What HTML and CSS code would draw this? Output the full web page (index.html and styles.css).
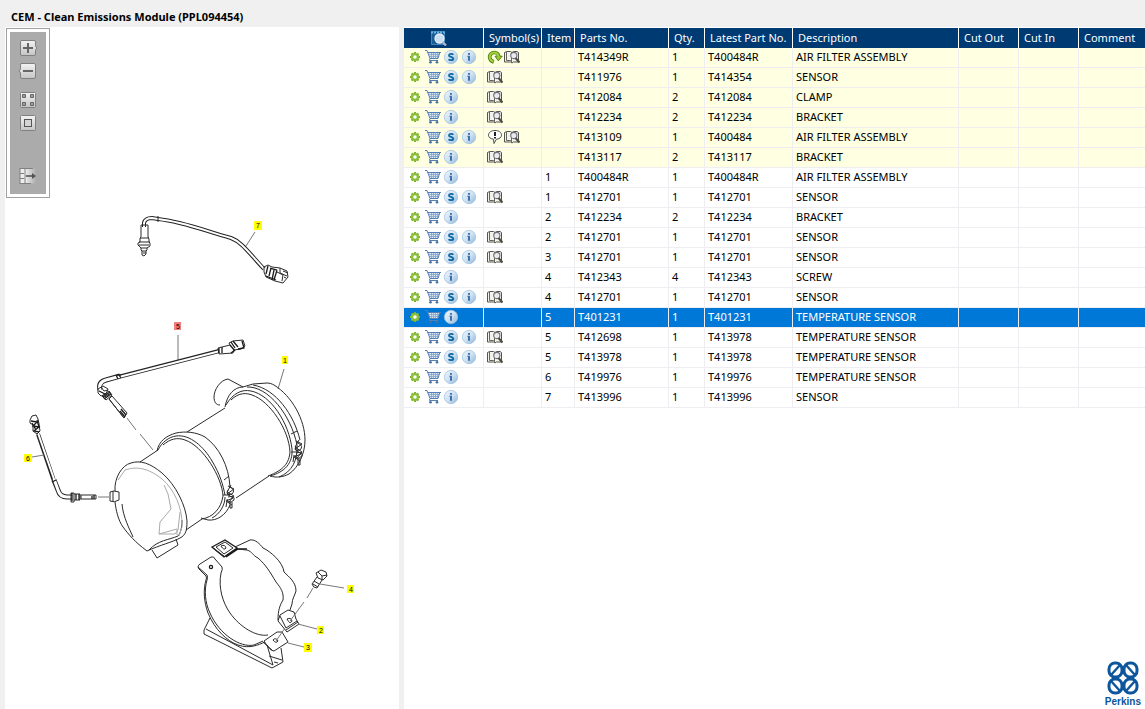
FILE: index.html
```html
<!DOCTYPE html>
<html lang="en">
<head>
<meta charset="utf-8">
<title>CEM - Clean Emissions Module (PPL094454)</title>
<link rel="stylesheet" href="styles.css">
</head>
<body>
<svg class="sprite" aria-hidden="true">
  <defs>
    <linearGradient id="g-ball" x1="0" y1="0" x2="1" y2="1">
      <stop offset="0" stop-color="#eef6fc"/><stop offset=".5" stop-color="#cfe2f1"/><stop offset="1" stop-color="#8fb8da"/>
    </linearGradient>
    <linearGradient id="g-key" x1="0" y1="0" x2="0" y2="1">
      <stop offset="0" stop-color="#f4f4f4"/><stop offset="1" stop-color="#c4c4c4"/>
    </linearGradient>
    <linearGradient id="g-fade" x1="0" y1="0" x2="1" y2="0">
      <stop offset="0" stop-color="#f0f0f0"/><stop offset="1" stop-color="#ababab"/>
    </linearGradient>
  </defs>
  <symbol id="gear" viewBox="0 0 16 16">
    <path d="M8 3V13M3 8H13M4.500 4.500L11.500 11.500M11.500 4.500L4.500 11.500" stroke="#7db32c" stroke-width="2"/>
    <circle cx="8" cy="8" r="2.900" fill="#fff" stroke="#8cbf3c" stroke-width="2.300"/>
  </symbol>
  <symbol id="cart" viewBox="0 0 16 16">
    <path d="M3 3.500H14.500L13 9.500H5Z" fill="#dbe6f3"/>
    <path d="M4 5.500H14M4.500 7.500H13.500M6.500 3.500V9.500M8.500 3.500V9.500M10.500 3.500V9.500M12.500 3.500V9.500" stroke="#84a4cd" stroke-width=".8"/>
    <path d="M0 1.500H2L5 9.500L4.500 11.500H13M2.500 3.500H16M14.800 3.500L13 9.500H5" fill="none" stroke="#5580b5"/>
    <circle cx="5.500" cy="13.300" r="1.300" fill="#44719f"/><circle cx="12" cy="13.300" r="1.300" fill="#44719f"/>
  </symbol>
  <symbol id="super" viewBox="0 0 16 16">
    <circle cx="8" cy="8" r="6.700" fill="url(#g-ball)" stroke="#9dbfdd" stroke-width=".7"/>
    <path d="M10.300 5.700C9.500 4.600 6 4.500 6 6.400C6 8.300 10.200 7.600 10.200 9.700C10.200 11.600 6.500 11.500 5.600 10.300" fill="none" stroke="#0e69a4" stroke-width="1.900"/>
  </symbol>
  <symbol id="info" viewBox="0 0 16 16">
    <circle cx="8" cy="8" r="6.700" fill="url(#g-ball)" stroke="#9dbfdd" stroke-width=".7"/>
    <path d="M7 4h2v1.700h-2zM6.500 6.700h2.500v5h-2v-3.700h-.5z" fill="#3f70ad"/>
  </symbol>
  <symbol id="book" viewBox="0 0 16 16">
    <path d="M.5 3.500L2.500 2.500H6.500L8 3.500L9.500 2.500H13L14.500 3.500V13H9.300L8 14L6.700 13H.5Z" fill="#f3f3ee" stroke="#55554f"/>
    <path d="M2.500 3V11.500H6.500L8 13M7.500 3.500V13" fill="none" stroke="#66665f"/>
    <circle cx="9.800" cy="6.500" r="3.100" fill="#e9e9ee" stroke="#70707a" stroke-width="1.100"/>
    <path d="M11.500 9L15.500 13.500" stroke="#4b4b3d" stroke-width="2"/>
  </symbol>
  <symbol id="reman" viewBox="0 0 16 16">
    <path d="M6.800 13C2.500 11.500 1.600 7.500 3.800 5C6.500 2.300 11 3.200 11.800 7.500" fill="none" stroke="#4e7c11" stroke-width="3.600"/>
    <path d="M8 7.200H15.300L11.300 11.800Z" fill="#9ccb2e" stroke="#4e7c11" stroke-width=".9"/>
    <path d="M6.500 12.700C2.500 11.500 1.600 7.500 3.800 5C6.500 2.300 11 3.200 11.800 8" fill="none" stroke="#a4d435" stroke-width="2"/>
  </symbol>
  <symbol id="note" viewBox="0 0 16 16">
    <path d="M8 1.500C12 1.500 14.500 3.500 14.500 6.200C14.500 8.600 12 10 9.300 10.300L7 14.500L6.500 10.200C3.500 9.800 1.500 8.400 1.500 6.200C1.500 3.500 4 1.500 8 1.500Z" fill="#fff" stroke="#4c4c4c"/>
    <path d="M8 3V7" stroke="#222" stroke-width="2"/><path d="M7 8h2v1.400H7z" fill="#222"/>
  </symbol>
</svg>

<header class="titlebar"><h1 class="title">CEM - Clean Emissions Module (PPL094454)</h1></header>

<main class="workspace">
  <section class="viewer" aria-label="Illustration">
    <svg class="drawing" viewBox="5 27 394 682" role="img" aria-label="Exploded view of the clean emissions module">
      <!-- sensor 7 -->
      <path class="cable" d="M144 227V223Q145 218 152 218L158 219C185 222 205 231 231 238C242 242 249 253 264 269"/>
      <path class="cable-core" d="M144 228V223Q145 218 152 218L158 219C185 222 205 231 231 238C242 242 249 253 265 270"/>
      <path class="part" d="M158 216V222M141 225H148V237L149 239V242L150 243V246L147 248V250L146 251V254L144 256L142 255V251L141 250V248L138 245V243L140 242V238L141 237ZM140 238H149M139 242H150M139 245H149M141 248H147M142 251H146M143 253H146"/>
      <path class="part" d="M264 267L268 265L272 267L280 268L287 271L288 277L283 283L275 281L266 277L264 272Z"/>
      <path class="part bold" d="M268 266L266 274M271 268L269 276M274 270L272 280M277 270L274 280M270 268L277 270M266 276L276 280"/>
      <path class="part" d="M280 268V273L287 276M283 271L288 273M277 272L283 275L282 281M284 277L286 278"/>
      <path class="leader" d="M255 232L246 246M178 335V360M284 369L278 389"/>
      <!-- sensor 5 -->
      <path class="cable" d="M120 376.500L219 351"/><path class="cable-core" d="M119 377L220 351"/>
      <path class="cable wide" d="M120 376L106 380Q98 382 100 390"/><path class="cable-core wide" d="M121 376L106 380Q98 382 100 391"/>
      <path class="part bold" d="M116 375L118 379M119 375L121 378M117 375H121"/>
      <path class="part" d="M98 389L103 386L108 389L106 394L101 396L98 393ZM101 387L104 391L108 390M102 396L109 391L112 395L106 400ZM103 398L111 393M109 399L112 396L127 413L124 418ZM109 399L124 418"/>
      <path class="part bold" d="M99 391L105 394M103 397L110 392M104 399L111 394M120 411L125 417M121 409L126 415"/>
      <path class="part" d="M218 348L230 345L229 343L233 341L243 340L245 346L241 349L234 350L233 353L219 354Z"/>
      <path class="part bold" d="M219 348V353M222 347V353M230 345L235 351M231 342L235 348M233 341L238 347M235 350L231 353M242 341L244 348L238 349"/>
      <path class="leader" d="M127 418L136 430M140 434L153 450"/>
      <!-- rear can -->
      <path class="part" d="M187 432L225 408M236 498L269 476M243 387L228 379C220 380 214 390 214 397C214 402 216 405 220 405"/>
      <path class="part" d="M225 407C227 395 234 387 243 387L253 384L267 383C270 383 272 384 274 385C292 396 305 420 305 440C305 453 299 467 289 474C283 477 277 478 270 476"/>
      <path class="part" d="M226 405C233 393 242 389 251 391C271 395 289 423 292 449C293 463 285 472 270 476M247 387C268 386 291 415 297 445C298 460 292 472 279 477M231 400C239 392 247 393 252 395C270 401 289 430 290 452C289 463 284 470 268 476M253 385C276 389 294 415 300 440M291 434L297 431"/>
      <path class="part" d="M296 441L302 444L295 449L301 454L294 457L300 461M299 440L295 447L302 452L297 458M291 452H298M298 458V465M300 458V465H298M294 455L293 462M298 443Q304 446 300 450Q293 452 296 446M296 453Q303 451 302 456Q296 461 295 455"/>
      <!-- front can -->
      <path class="part" d="M140 462L158 450M157 451C159 441 166 436 176 433C186 431 196 432 205 437C219 447 229 466 230 487M158 450C162 442 169 437 176 436C190 434 204 447 212 461C220 474 223 485 225 495M163 445C170 439 177 437 185 440C203 446 222 477 223 496C221 509 213 517 202 519M230 505C226 515 217 521 208 520L201 518M225 497C225 505 220 514 212 518M224 480L229 476M186 530L202 519"/>
      <path class="part" d="M228 486L234 489L227 494L233 498L226 501L232 505M231 485L227 492L234 496L229 502M223 495H230M230 501V508H232V502M227 501L226 507M230 487Q236 490 232 494Q225 496 228 490M228 497Q235 495 234 500Q228 505 227 499"/>
      <!-- end cap -->
      <path class="part" d="M115 491C114 478 122 465 131 463C140 460 150 463 162 473C176 485 186 506 187 521C187 530 186 535 180 538C173 542 160 545 147 551C135 542 129 535 123 527C118 520 116 510 115 502"/>
      <path class="part" d="M122 504C123 517 130 530 133 537M149 550C158 540 169 540 178 536C180 534 182 529 182 520"/>
      <path class="thin" d="M118 480L125 470C137 466 148 468 162 479C174 489 183 508 182 527L179 536M164 485L168 494L171 509L160 522L159 534L177 529V535M180 512L178 530L175 534L159 534"/>
      <path class="part" d="M152 550L157 558L178 545L176 539M110 492Q113 490 119 492V500Q114 503 110 501ZM113 491V501"/>
      <!-- sensor 6 -->
      <path class="cable" d="M38 434L54 481"/><path class="cable-core" d="M38 433L55 482"/>
      <path class="cable wide" d="M54 480L58 490Q60 497 67 497H72"/><path class="cable-core wide" d="M54 479L58 490Q60 497 67 497H73"/>
      <path class="part" d="M30 420L32 416L36 415L38 419L39 424L40 431L37 434L33 431V425L30 423Z"/>
      <path class="part bold" d="M31 421L37 422L33 426L39 427L34 431L39 432M37 420L39 427M32 423L36 430M52 482L56 480"/>
      <path class="part" d="M71 493H74V502H71ZM74 494H80V500H74M81 495H96V499H81Z"/>
      <path class="part bold" d="M76 494V500M79 494V500M92 496V499M94 495V499M72 493V501"/>
      <path class="leader" d="M98 497H109M32 457L44 455"/>
      <!-- upper strap -->
      <path class="part bold" d="M212 547L225 540L237 548L224 557ZM226 557L238 549L247 549"/>
      <path class="part" d="M216 547L225 542L233 548L224 554ZM214 549L224 556M221 546Q225 544 226 548Q224 551 221 546M235 547L250 540C255 539 260 544 263 548C270 551 283 562 284 572C289 577 296 582 296 591C295 595 292 599 292 604L290 610"/>
      <path class="part" d="M237 549L247 550C253 552 252 555 258 558C266 565 270 572 276 582C281 588 284 593 283 600C280 605 278 610 278 620"/>
      <path class="part" d="M288 610L280 615L278 621L287 632L299 624L296 619L294 612ZM280 616L286 628L297 621M286 630L298 622M287 619Q291 617 292 621Q290 625 287 619"/>
      <!-- lower strap -->
      <path class="part" d="M207 575L198 567Q198 565 200 564L211 557Q214 556 215 559L222 567Q223 569 221 573C218 588 223 603 230 613C240 627 256 637 268 635"/>
      <path class="part" d="M198 567L199 569L206 576Q207 578 206 580C203 590 204 602 208 613C215 630 227 641 238 645C250 649 258 645 265 642M207 575Q208 577 207 580C204 590 205 603 210 613C219 634 240 648 254 645L263 641"/>
      <circle class="part bold" cx="211" cy="567" r="1.600"/>
      <path class="part" d="M264 641L277 632L282 632L288 642L274 651Q270 651 264 641ZM263 642L272 650M273 640Q276 637 278 641Q276 644 273 640"/>
      <path class="part" d="M210 618L204 630V634L272 668L283 662L281 648M206 629L273 665L267 645M269 656L282 660M274 662L278 663"/>
      <!-- bolt -->
      <path class="part" d="M316 573L321 570L326 572L327 576L323 580L318 578ZM318 572L322 576L327 575M322 576V580M317 577L312 584Q313 588 317 588L322 580M314 581L319 584M313 584L318 587"/>
      <path class="leader" d="M313 588L307 598M304 602L290 621M285 628L276 641M320 584L344 588M298 624L317 629M288 643L304 647"/>
      <g class="callouts">
        <rect x="254" y="221" width="8" height="9"/><text x="258" y="228">7</text>
        <rect class="picked" x="174" y="322" width="7" height="8"/><text x="178" y="329">5</text>
        <rect x="282" y="356" width="6" height="8"/><text x="285" y="363">1</text>
        <rect x="24" y="454" width="8" height="8"/><text x="28" y="461">6</text>
        <rect x="347" y="585" width="7" height="8"/><text x="351" y="592">4</text>
        <rect x="317" y="626" width="7" height="8"/><text x="321" y="633">2</text>
        <rect x="304" y="643" width="8" height="9"/><text x="308" y="650">3</text>
      </g>
    </svg>
    <div class="toolbar" role="toolbar" aria-label="View">
      <div class="tools">
        <button class="tool" type="button" aria-label="Zoom in"><svg viewBox="0 0 20 18"><path d="M3 1.500H16Q17.500 1.500 17.500 3V7L19 9L17.500 11V15Q17.500 16.500 16 16.500H4Q2.500 16.500 2.500 15V3Z" fill="url(#g-key)" stroke="#808080"/><path d="M10 4V14M5 9H15" stroke="#666" stroke-width="2"/></svg></button>
        <button class="tool" type="button" aria-label="Zoom out"><svg viewBox="0 0 20 18"><path d="M3 1.500H16Q17.500 1.500 17.500 3V15Q17.500 16.500 16 16.500H4Q2.500 16.500 2.500 15V11L1 9L2.500 7V3Z" fill="url(#g-key)" stroke="#808080"/><path d="M5 9H15" stroke="#666" stroke-width="2"/></svg></button>
      </div>
      <div class="tools">
        <button class="tool" type="button" aria-label="Tile view"><svg viewBox="0 0 20 18"><rect x="2.500" y="1.500" width="15" height="15" rx="1" fill="url(#g-key)" stroke="#808080"/><path d="M4.500 3.500h3v3h-3zM12.500 3.500h3v3h-3zM4.500 11.500h3v3h-3zM12.500 11.500h3v3h-3z" fill="#a0a0a0" stroke="#666"/></svg></button>
        <button class="tool" type="button" aria-label="Fit to window"><svg viewBox="0 0 20 18"><rect x="2.500" y="1.500" width="15" height="15" rx="1" fill="url(#g-key)" stroke="#808080"/><rect x="6.500" y="5.500" width="7" height="7" fill="#d4d4d4" stroke="#555"/></svg></button>
      </div>
      <div class="tools last">
        <button class="tool" type="button" aria-label="Hide panel"><svg viewBox="0 0 20 18"><path d="M7 1.500H18V16.500H7Z" fill="url(#g-fade)"/><path d="M2 1.500H7V16.500H2Z" fill="#eee"/><path d="M2 1.500H15M2 16.500H13M2 1V17M7 1V17M2 6.500H6M2 11.500H6" stroke="#808080" fill="none"/><path d="M8 9H16" stroke="#555" stroke-width="1.600"/><path d="M14 6L18 9L14 12Z" fill="#555"/></svg></button>
      </div>
    </div>
  </section>

  <section class="parts" aria-label="Parts list">
    <table class="grid">
      <colgroup><col class="c-act"><col class="c-sym"><col class="c-item"><col class="c-part"><col class="c-qty"><col class="c-latest"><col class="c-desc"><col class="c-cut"><col class="c-cut"><col></colgroup>
      <thead>
        <tr>
          <th scope="col" class="finder"><button class="icon" type="button" aria-label="Search list"><svg viewBox="0 0 18 16"><path d="M1.500 1.500H14.500V14.500H1.500Z" fill="#1a5c94" stroke="#3a86bd"/><path d="M1 2.500H15" stroke="#69b4e4" stroke-width="2" stroke-dasharray="2 1"/><circle cx="9.500" cy="8.500" r="4.500" fill="#c9dff0" stroke="#e8eff5" stroke-width="1.300"/><path d="M12.500 12L16 15.500" stroke="#a9b9c8" stroke-width="2.400"/></svg></button></th>
          <th scope="col">Symbol(s)</th><th scope="col">Item</th><th scope="col">Parts No.</th><th scope="col">Qty.</th><th scope="col">Latest Part No.</th><th scope="col">Description</th><th scope="col">Cut Out</th><th scope="col">Cut In</th><th scope="col">Comment</th>
        </tr>
      </thead>
      <tbody id="rows"></tbody>
    </table>
    <div class="brand">
      <svg class="logo" viewBox="0 0 32 34" aria-hidden="true"><g fill="none" stroke="#0d559c" stroke-width="3"><rect x="2" y="2" width="13" height="14" rx="6"/><rect x="17" y="2" width="13" height="14" rx="6"/><rect x="2" y="18" width="13" height="14" rx="6"/><rect x="17" y="18" width="13" height="14" rx="6"/><path d="M4 14L13 4M28 14L19 4M4 20L13 30M28 20L19 30" stroke-width="2.400"/></g></svg>
      <span class="brand-name">Perkins</span>
    </div>
  </section>
</main>
<script src="script.js"></script>
</body>
</html>
```

FILE: styles.css
```css
* { box-sizing: border-box; }

body {
  margin: 0;
  min-height: 100vh;
  display: flex;
  flex-direction: column;
  background: #f0f0f0;
  font-family: "Noto Sans", "Open Sans", sans-serif;
  font-size: 11px;
  line-height: 16px;
  color: #000;
}

button {
  border: 0;
  padding: 0;
  background: none;
  font: inherit;
  cursor: pointer;
}

svg { display: block; }
.sprite { position: absolute; width: 0; height: 0; }

.titlebar { padding: 9px 11px 2px; }
.title { margin: 0; font-size: 11px; line-height: 16px; font-weight: 700; }

.workspace {
  flex: 1;
  display: flex;
  gap: 5px;
  padding-left: 5px;
}

/* illustration */
.viewer {
  position: relative;
  flex: 0 0 394px;
  background: #fff;
}
.drawing { width: 100%; height: auto; }

.part { fill: none; stroke: #2a2a2a; stroke-width: 1; }
.part.bold { stroke: #1a1a1a; stroke-width: 1.3; }
.thin { fill: none; stroke: #aaa; stroke-width: 1; }
.leader { fill: none; stroke: #777; stroke-width: 1; }
.cable { fill: none; stroke: #222; stroke-width: 4; }
.cable-core { fill: none; stroke: #fff; stroke-width: 2; }
.cable.wide { stroke-width: 5; }
.cable-core.wide { stroke-width: 3; }

.callouts { font-family: "Liberation Sans", sans-serif; font-size: 7px; text-anchor: middle; }
.callouts rect { fill: #ff0; }
.callouts .picked { fill: #f47f7f; }

.toolbar {
  position: absolute;
  top: 1px;
  left: 1px;
  width: 44px;
  padding: 10px 11px 12px;
  border: 1px solid #a0a0a0;
  outline: 3px solid #fff;
  outline-offset: -4px;
  background: #ababab;
  display: flex;
  flex-direction: column;
  gap: 11px;
}
.tools { display: flex; flex-direction: column; gap: 5px; }
.tools.last { margin-top: 24px; }
.tool { width: 20px; height: 18px; }

/* parts list */
.parts {
  flex: 1;
  min-width: 0;
  padding-top: 1px;
  background: #fff;
  display: flex;
  flex-direction: column;
  overflow: hidden;
}
.grid {
  width: 100%;
  table-layout: fixed;
  border-collapse: separate;
  border-spacing: 0;
}
.c-act { width: 80px; }
.c-sym { width: 58px; }
.c-item { width: 33px; }
.c-part { width: 94px; }
.c-qty { width: 36px; }
.c-latest { width: 88px; }
.c-desc { width: 166px; }
.c-cut { width: 60px; }

.grid th,
.grid td {
  height: 20px;
  padding: 0 3px;
  border-right: 1px solid #ededf2;
  text-align: left;
  white-space: nowrap;
}
.grid th {
  padding: 0 5px;
  border-right-color: #fff;
  background: #003a73;
  color: #fff;
  font-weight: 400;
  vertical-align: middle;
}
.grid td {
  border-bottom: 1px solid #ededf2;
  line-height: 18px;
  vertical-align: top;
}
.grid th:last-child,
.grid td:last-child { border-right: 0; }
.grid .finder { padding: 0 0 0 26px; }
.finder .icon { display: block; }
.finder svg { width: 18px; height: 16px; }

.related td { background: #ffffe1; }
.selected td { background: #0078d7; color: #fff; }

.grid .act { padding: 0 2px; }
.icons { display: flex; align-items: center; height: 18px; }
.icons .icon { flex: 0 0 18px; display: flex; justify-content: center; }
.symbols { gap: 1px; }
.icons svg { width: 16px; height: 16px; }

.brand {
  margin-top: auto;
  align-self: flex-end;
  padding-right: 4px;
  color: #0d559c;
  display: flex;
  flex-direction: column;
  align-items: center;
}
.logo { width: 32px; height: 34px; }
.brand-name {
  font-family: "Liberation Sans", sans-serif;
  font-size: 10px;
  line-height: 14px;
  font-weight: 700;
}
```

FILE: script.js
```js
// kind, actions, symbols, item, part number, quantity, latest part number, description
const parts = [
  ["related", "gear cart super info", "reman book", "", "T414349R", 1, "T400484R", "AIR FILTER ASSEMBLY"],
  ["related", "gear cart super info", "book", "", "T411976", 1, "T414354", "SENSOR"],
  ["related", "gear cart info", "book", "", "T412084", 2, "T412084", "CLAMP"],
  ["related", "gear cart info", "book", "", "T412234", 2, "T412234", "BRACKET"],
  ["related", "gear cart super info", "note book", "", "T413109", 1, "T400484", "AIR FILTER ASSEMBLY"],
  ["related", "gear cart info", "book", "", "T413117", 2, "T413117", "BRACKET"],
  ["", "gear cart info", "", 1, "T400484R", 1, "T400484R", "AIR FILTER ASSEMBLY"],
  ["", "gear cart super info", "book", 1, "T412701", 1, "T412701", "SENSOR"],
  ["", "gear cart info", "", 2, "T412234", 2, "T412234", "BRACKET"],
  ["", "gear cart super info", "book", 2, "T412701", 1, "T412701", "SENSOR"],
  ["", "gear cart super info", "book", 3, "T412701", 1, "T412701", "SENSOR"],
  ["", "gear cart info", "", 4, "T412343", 4, "T412343", "SCREW"],
  ["", "gear cart super info", "book", 4, "T412701", 1, "T412701", "SENSOR"],
  ["selected", "gear cart info", "", 5, "T401231", 1, "T401231", "TEMPERATURE SENSOR"],
  ["", "gear cart super info", "book", 5, "T412698", 1, "T413978", "TEMPERATURE SENSOR"],
  ["", "gear cart super info", "book", 5, "T413978", 1, "T413978", "TEMPERATURE SENSOR"],
  ["", "gear cart info", "", 6, "T419976", 1, "T419976", "TEMPERATURE SENSOR"],
  ["", "gear cart info", "", 7, "T413996", 1, "T413996", "SENSOR"]
];

const labels = {
  gear: "Options", cart: "Add to cart", super: "Supersession", info: "Part information"
};

const glyph = name => `<svg aria-hidden="true"><use href="#${name}"/></svg>`;
const names = list => list.split(" ").filter(Boolean);

document.getElementById("rows").innerHTML = parts.map(([kind, actions, symbols, ...cells]) => `
  <tr class="${kind}">
    <td class="act"><div class="icons">${names(actions).map(n =>
      `<button class="icon" type="button" aria-label="${labels[n]}">${glyph(n)}</button>`).join("")}</div></td>
    <td><div class="icons symbols">${names(symbols).map(glyph).join("")}</div></td>
    ${cells.map(value => `<td>${value}</td>`).join("")}
    <td></td><td></td><td></td>
  </tr>`).join("");
```
